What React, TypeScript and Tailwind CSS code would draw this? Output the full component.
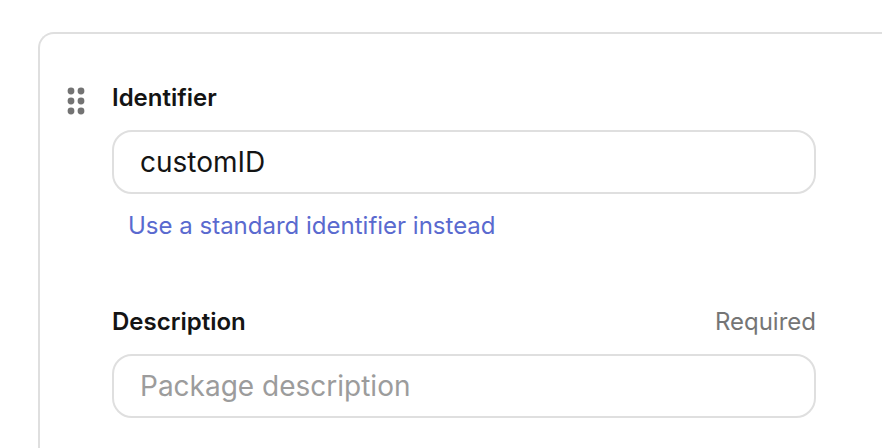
import React from "react";

const dots = [5, 15].flatMap((x) => [5, 15, 25].map((y) => ({ x, y })));

const inputClass =
  "mt-4 block h-16 w-full rounded-[20px] border-2 border-[#dfdfdf] bg-white px-[26px] text-[28px] text-[#141414] outline-none placeholder:text-[#9c9c9c] placeholder:opacity-100";

export default function App() {
  return (
    <main className="h-screen overflow-hidden bg-white pt-8 pl-[38px] font-['Inter',sans-serif] text-2xl antialiased">
      <section className="flex min-h-screen gap-[26px] rounded-tl-2xl border-t-2 border-l-2 border-[#dfdfdf] pt-12 pr-[66px] pl-[26px]">
        <button type="button" aria-label="Reorder package" className="mt-1 h-[30px] w-5 shrink-0">
          <svg viewBox="0 0 20 30" className="h-[30px] w-5" fill="#737373">
            {dots.map(({ x, y }) => (
              <circle key={`${x}-${y}`} cx={x} cy={y} r="3.4" />
            ))}
          </svg>
        </button>
        <form className="flex min-w-0 grow flex-col gap-16">
          <div>
            <label htmlFor="identifier" className="block leading-8 font-semibold text-[#141414]">
              Identifier
            </label>
            <input id="identifier" defaultValue="customID" className={inputClass} />
            <button type="button" className="mt-4 ml-4 block leading-8 text-[#5a6acf]">
              Use a standard identifier instead
            </button>
          </div>
          <div>
            <div className="flex justify-between leading-8">
              <label htmlFor="description" className="font-semibold text-[#141414]">
                Description
              </label>
              <span className="text-[#757575]">Required</span>
            </div>
            <input id="description" required placeholder="Package description" className={inputClass} />
          </div>
        </form>
      </section>
    </main>
  );
}
